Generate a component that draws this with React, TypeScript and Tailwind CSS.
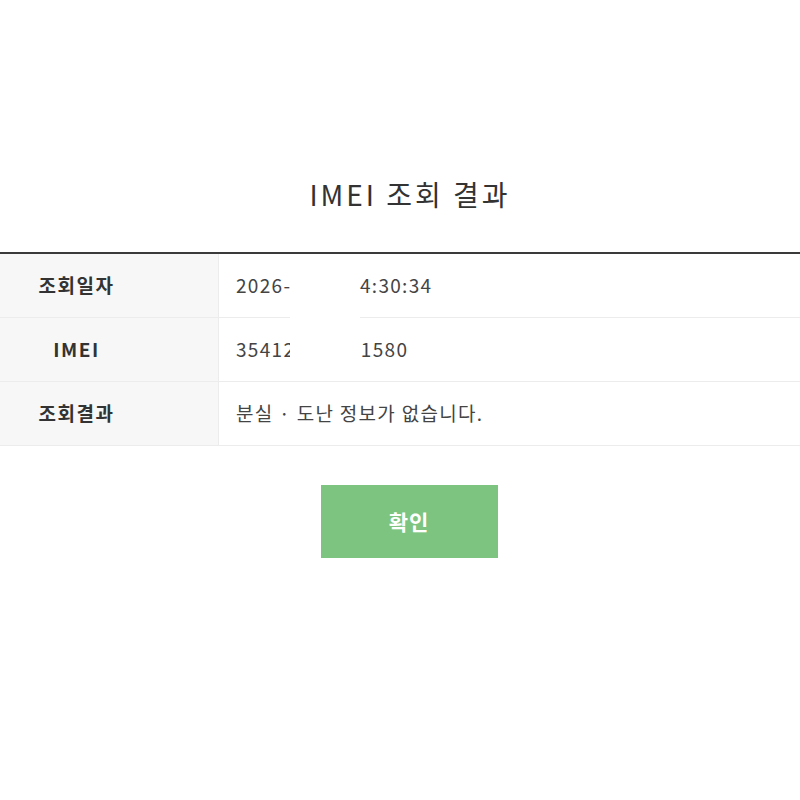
import React from 'react';

type Row = { label: string; head: string; tail?: string; headWidth?: string };

const rows: Row[] = [
  { label: '조회일자', head: '2026-', tail: '4:30:34', headWidth: 'w-[124px]' },
  { label: 'IMEI', head: '35412', tail: '31580', headWidth: 'w-[113px]' },
  { label: '조회결과', head: '분실 · 도난 정보가 없습니다.' },
];

export default function App() {
  return (
    <div
      className="w-[800px] h-[800px] bg-white text-[#333] overflow-hidden"
      style={{ fontFamily: '"Noto Sans CJK KR", "Noto Sans", sans-serif' }}
    >
      <div className="pt-[174px] pl-[20px] flex justify-center">
        <h1 className="text-[28px] leading-[40px] font-normal tracking-[3px] text-[#333]">IMEI 조회 결과</h1>
      </div>

      <div className="relative mt-[38px] border-t-2 border-[#3a3a3a]">
        {rows.map((row) => (
          <div key={row.label} className="flex h-[64px] border-b border-[#ececec]">
            <div className="w-[219px] shrink-0 bg-[#f7f7f7] border-r border-[#ececec] flex items-center">
              <span className="w-[153px] text-center text-[19px] font-bold tracking-[1.5px] text-[#333]">
                {row.label}
              </span>
            </div>
            <div className="flex-1 flex items-center pl-[17px] text-[19px] tracking-[1.3px] text-[#444] whitespace-nowrap">
              <span className={row.headWidth ? `${row.headWidth} shrink-0 overflow-hidden` : ''}>{row.head}</span>
              {row.tail && <span>{row.tail}</span>}
            </div>
          </div>
        ))}
        {/* masked part of the date and IMEI */}
        <div className="absolute left-[290px] top-[10px] w-[70px] h-[112px] bg-white" />
      </div>

      <div className="mt-[39px] pl-[18px] flex justify-center">
        <button className="w-[177px] h-[73px] bg-[#7cc47f] text-white text-[21px] font-bold tracking-[1px]">확인</button>
      </div>
    </div>
  );
}
